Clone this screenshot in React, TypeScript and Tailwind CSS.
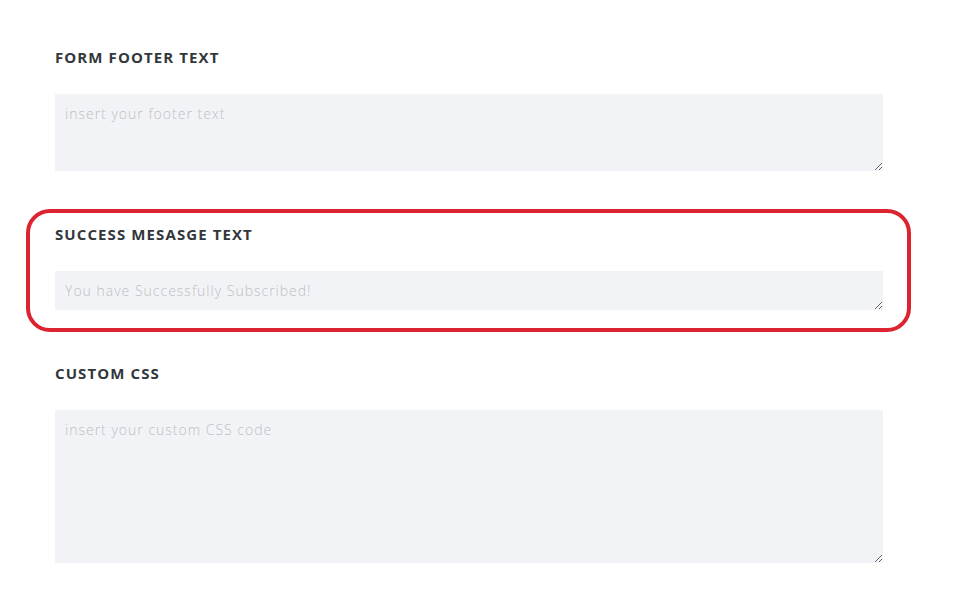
import React from "react";

const labelCls =
  "block text-[15px] leading-[18px] font-bold uppercase tracking-[1.1px] text-[#32373c]";
const areaCls =
  "block w-full bg-[#f2f3f6] border-0 outline-none px-[10px] pt-[10px] pb-[8px] text-[14px] leading-[20px] font-light tracking-[1px] text-[#555] placeholder:text-[#bcbfc5] resize-y";

export default function App() {
  return (
    <div
      className="min-h-[615px] w-[960px] bg-white"
      style={{ fontFamily: '"Open Sans", "Noto Sans", sans-serif' }}
    >
      <div className="pl-[26px] pt-[48px] w-[911px] flex flex-col">
        <div className="pl-[29px] pr-[28px]">
          <label className={labelCls}>Form Footer Text</label>
          <textarea
            className={`${areaCls} mt-[28px] h-[77px]`}
            placeholder="insert your footer text"
          />
        </div>
        <div className="mt-[38px] border-[4px] border-[#dc2430] rounded-[24px] pl-[25px] pr-[24px] pt-[12px] pb-[18px]">
          <label className={labelCls}>Success Mesasge Text</label>
          <textarea
            className={`${areaCls} mt-[28px] h-[39px]`}
            placeholder="You have Successfully Subscribed!"
          />
        </div>
        <div className="pl-[29px] pr-[28px] mt-[32px]">
          <label className={labelCls}>Custom CSS</label>
          <textarea
            className={`${areaCls} mt-[28px] h-[153px]`}
            placeholder="insert your custom CSS code"
          />
        </div>
      </div>
    </div>
  );
}
